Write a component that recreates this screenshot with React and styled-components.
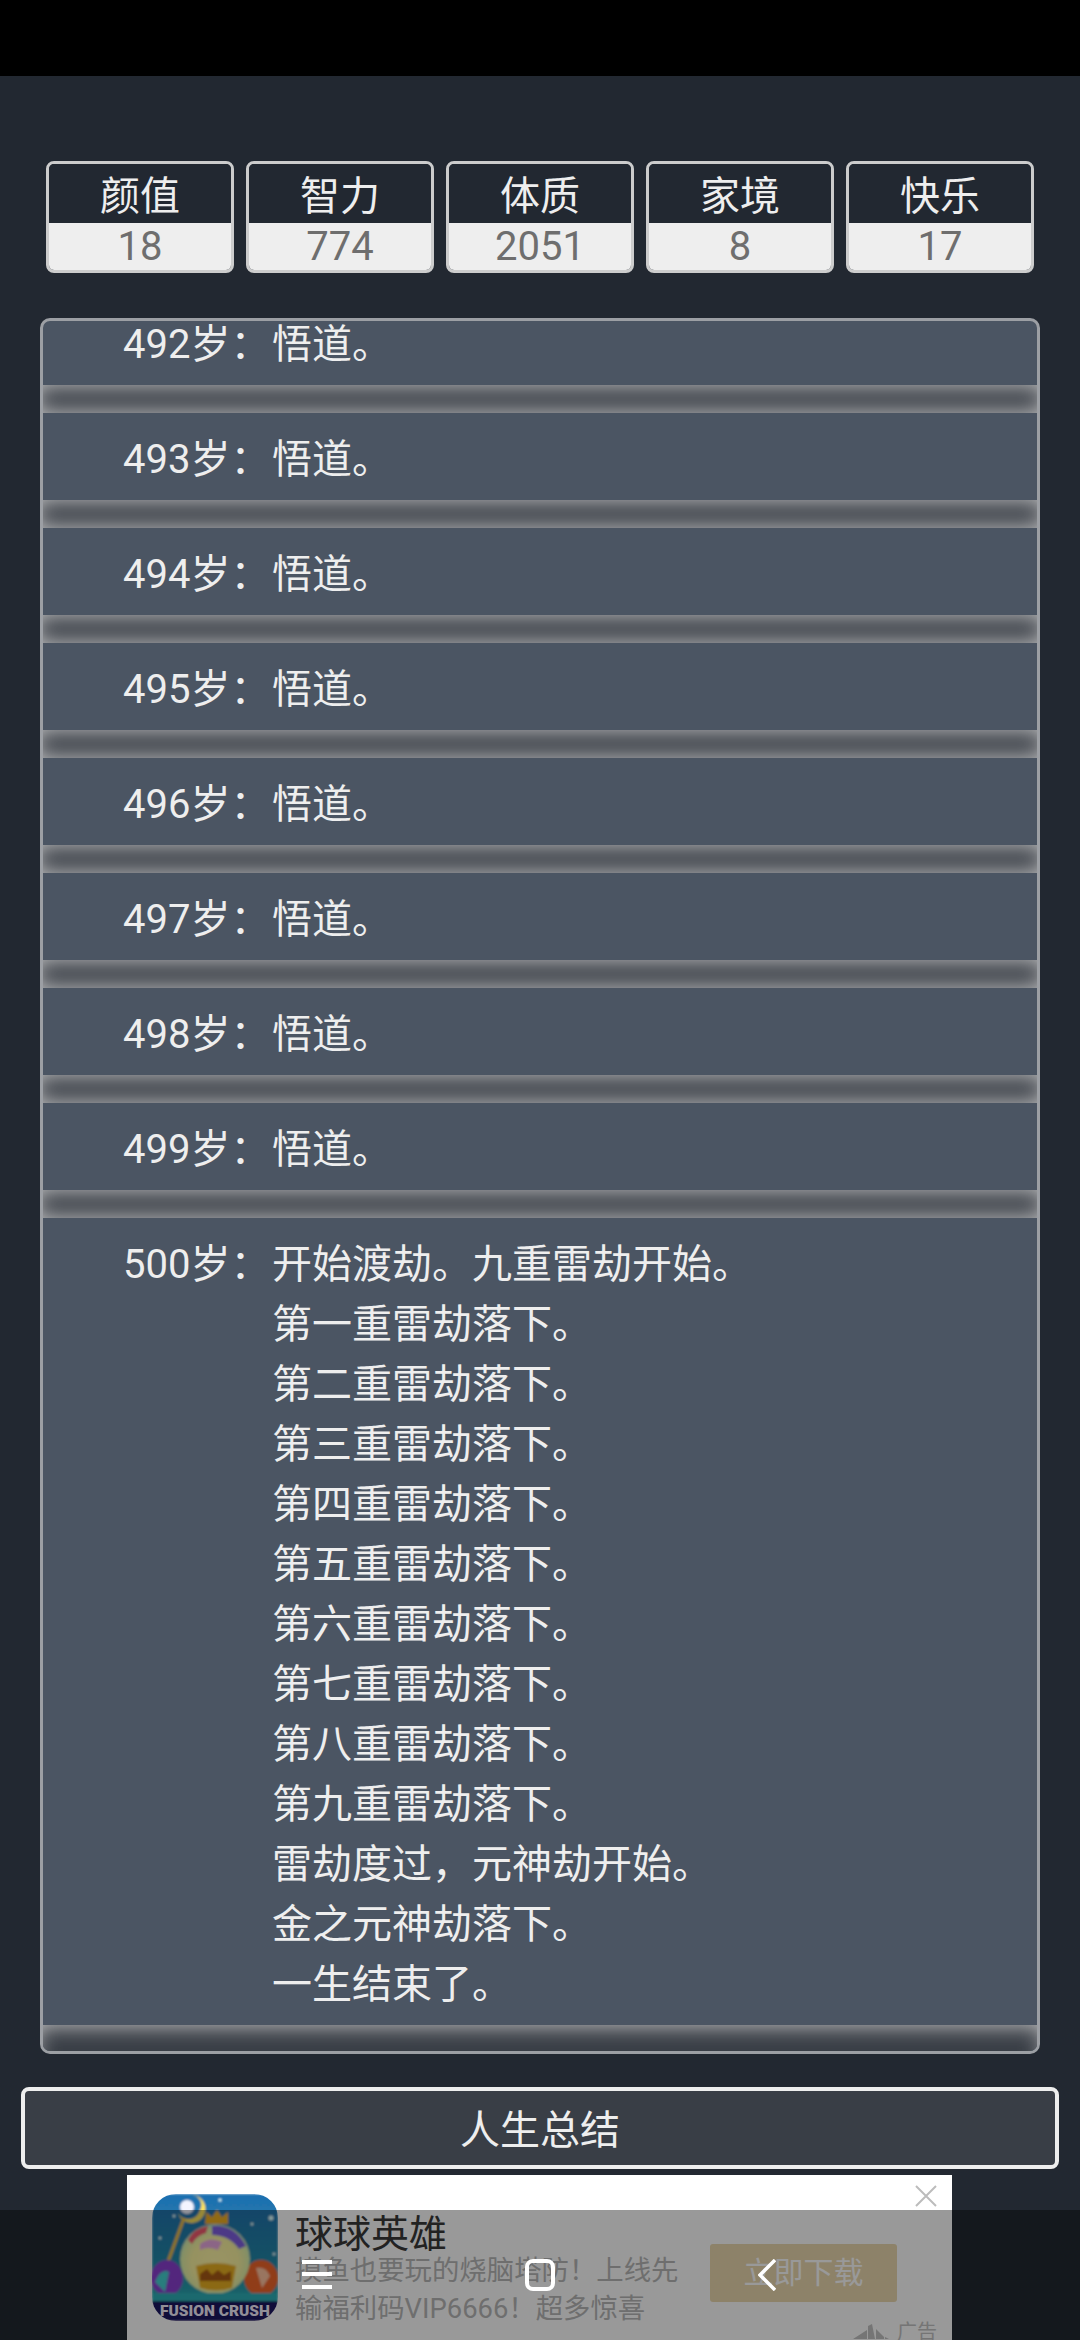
import React from 'react';
import styled, { createGlobalStyle } from 'styled-components';

const GlobalStyle = createGlobalStyle`
  html, body {
    margin: 0;
    padding: 0;
    background: #222831;
    font-family: Roboto, "Noto Sans CJK SC", sans-serif;
  }
`;

const Page = styled.div`
  position: relative;
  width: 1080px;
  height: 2340px;
  overflow: hidden;
  background: #222831;
`;

const StatusBar = styled.div`
  height: 76px;
  background: #000;
`;

const Stats = styled.div`
  display: flex;
  gap: 12px;
  margin: 85px 46px 45px;
`;

const Stat = styled.div`
  width: 188px;
  height: 112px;
  box-sizing: border-box;
  border: 3px solid #ccc;
  border-radius: 8px;
  overflow: hidden;
  text-align: center;
`;

const StatName = styled.div`
  height: 59px;
  line-height: 65px;
  font-size: 40px;
  color: #eee;
  background: #222831;
`;

const StatValue = styled.div`
  height: 47px;
  line-height: 47px;
  font-size: 40px;
  color: #6e6e6e;
  background: #eee;
`;

const LogBox = styled.div`
  width: 1000px;
  height: 1736px;
  margin-left: 40px;
  box-sizing: border-box;
  border: 3px solid #9c9fa4;
  border-radius: 10px;
  overflow: hidden;
  background: #4b5563;
`;

const LogScroll = styled.div`
  margin-top: -23px;
`;

const Entry = styled.div`
  display: grid;
  grid-template-columns: 149px 1fr;
  padding: 17px 0 10px 80px;
  font-size: 40px;
  line-height: 60px;
  color: #eee;
`;

const Rule = styled.div`
  height: ${props => (props.$last ? '60px' : '28px')};
  margin: 0 -7px;
  background: #393e46;
  box-shadow: inset 0 0 22px #d0d0d0;
`;

const SummaryButton = styled.div`
  width: 1038px;
  height: 82px;
  box-sizing: border-box;
  margin: 33px 0 0 21px;
  border: 4px solid #eee;
  border-radius: 8px;
  background: #393e46;
  color: #eee;
  font-size: 40px;
  line-height: 79px;
  text-align: center;
`;

const Ad = styled.div`
  position: absolute;
  left: 127px;
  top: 2175px;
  width: 825px;
  height: 165px;
  box-sizing: border-box;
  padding: 19px 55px 0 25px;
  display: flex;
  align-items: flex-start;
  background: #fff;
`;

const AdIcon = styled.svg`
  flex: none;
  width: 126px;
  height: 127px;
`;

const AdText = styled.div`
  flex: 1;
  margin: 17px 0 0 17px;
`;

const AdTitle = styled.div`
  font-size: 38px;
  line-height: 41px;
  height: 41px;
  padding-top: 3px;
  margin-bottom: -3px;
  color: #3a3a3a;
`;

const AdLine = styled.div`
  font-size: 27.4px;
  line-height: 38px;
  color: #b8b8b8;
  white-space: nowrap;
`;

const AdButton = styled.div`
  flex: none;
  width: 187px;
  height: 58px;
  margin-top: 50px;
  border-radius: 3px;
  background: #ecd9af;
  color: #fff;
  font-size: 30px;
  line-height: 58px;
  text-align: center;
`;

const AdClose = styled.svg`
  position: absolute;
  top: 10px;
  right: 15px;
  width: 22px;
  height: 22px;
`;

const AdMark = styled.div`
  position: absolute;
  right: 15px;
  top: 143px;
  display: flex;
  align-items: center;
  gap: 8px;
  color: #c4c4c4;
  font-size: 20px;
  line-height: 28px;
`;

const NavBar = styled.div`
  position: absolute;
  left: 0;
  right: 0;
  bottom: 0;
  height: 130px;
  padding-left: 206px;
  box-sizing: border-box;
  display: grid;
  grid-template-columns: 222px 224px 230px;
  align-items: center;
  justify-items: center;
  background: rgba(0, 0, 0, 0.4);
`;

const stats = [
  { name: '颜值', value: 18 },
  { name: '智力', value: 774 },
  { name: '体质', value: 2051 },
  { name: '家境', value: 8 },
  { name: '快乐', value: 17 }
];

const entries = [
  { age: 492, lines: ['悟道。'] },
  { age: 493, lines: ['悟道。'] },
  { age: 494, lines: ['悟道。'] },
  { age: 495, lines: ['悟道。'] },
  { age: 496, lines: ['悟道。'] },
  { age: 497, lines: ['悟道。'] },
  { age: 498, lines: ['悟道。'] },
  { age: 499, lines: ['悟道。'] },
  {
    age: 500,
    lines: [
      '开始渡劫。九重雷劫开始。',
      '第一重雷劫落下。',
      '第二重雷劫落下。',
      '第三重雷劫落下。',
      '第四重雷劫落下。',
      '第五重雷劫落下。',
      '第六重雷劫落下。',
      '第七重雷劫落下。',
      '第八重雷劫落下。',
      '第九重雷劫落下。',
      '雷劫度过，元神劫开始。',
      '金之元神劫落下。',
      '一生结束了。'
    ]
  }
];

const GameIcon = () => (
  <AdIcon viewBox="0 0 126 127">
    <defs>
      <linearGradient id="sky" x1="0" y1="0" x2="0" y2="1">
        <stop offset="0" stopColor="#1f6fb0" />
        <stop offset="0.5" stopColor="#2386a8" />
        <stop offset="0.8" stopColor="#2aa4b0" />
      </linearGradient>
      <radialGradient id="orb" cx="0.5" cy="0.55" r="0.55">
        <stop offset="0" stopColor="#fff6a8" />
        <stop offset="0.6" stopColor="#fbf3a0" />
        <stop offset="0.85" stopColor="#dff0a8" />
        <stop offset="1" stopColor="#b8e0c0" />
      </radialGradient>
      <clipPath id="iconClip">
        <rect width="126" height="127" rx="24" />
      </clipPath>
      <filter id="soft">
        <feGaussianBlur stdDeviation="1" />
      </filter>
    </defs>
    <g clipPath="url(#iconClip)">
      <g filter="url(#soft)">
        <rect width="126" height="127" fill="url(#sky)" />
        <circle cx="8" cy="44" r="1.5" fill="#dff" />
        <circle cx="119" cy="24" r="2.5" fill="#dff" />
        <circle cx="68" cy="6" r="1.5" fill="#dff" />
        <circle cx="22" cy="22" r="1.5" fill="#dff" />
        <circle cx="100" cy="30" r="1.5" fill="#dff" />
        <circle cx="122" cy="60" r="1.5" fill="#dff" />
        <path d="M40 1a14 14 0 1 1-14 18a12 12 0 0 0 22-3a10 10 0 0 0-8-15z" fill="#ffe45a" />
        <circle cx="35" cy="13" r="7" fill="#f4f4ff" />
        <path d="M32 24L13 76" stroke="#f2c23a" strokeWidth="3" />
        <ellipse cx="15" cy="84" rx="16" ry="18" fill="#8a3fd0" />
        <path d="M3 88q6-14 14-10l-4 20z" fill="#44d0d0" />
        <ellipse cx="109" cy="84" rx="17" ry="18" fill="#f0662a" />
        <path d="M104 74q10-2 14 8l-8 12z" fill="#ffc4a0" />
        <circle cx="63" cy="65" r="35" fill="url(#orb)" />
        <path d="M60 32q22-2 34 20l-7 3q-10-14-27-14z" fill="#7f5fe0" />
        <path d="M36 46q6-12 20-14l-2 7q-10 3-14 11z" fill="#f05a70" />
        <path d="M48 50q10-8 22-2l-4 8q-10-4-18 0z" fill="#e8a8e0" />
        <path d="M53 30l1-12 6 5 5-7 5 7 6-5 0 12z" fill="#f0b020" />
        <path d="M44 72q20-6 40 0l-4 22q-16 5-32 0z" fill="#e8b020" />
        <path d="M48 80l7-5 5 6 6-5 6 5 7-4v10h-31z" fill="#a85a18" />
        <rect y="99" width="126" height="9" fill="#2eb0b8" />
        <rect y="107" width="126" height="20" fill="#1c1660" />
      </g>
      <text x="63" y="122" textAnchor="middle" fontFamily="Roboto, sans-serif" fontWeight="900" fontSize="15.5" fill="#f4eefc">FUSION CRUSH</text>
    </g>
  </AdIcon>
);

const App = () => (
  <Page>
    <GlobalStyle />
    <StatusBar />
    <Stats>
      {stats.map(stat => (
        <Stat key={stat.name}>
          <StatName>{stat.name}</StatName>
          <StatValue>{stat.value}</StatValue>
        </Stat>
      ))}
    </Stats>
    <LogBox>
      <LogScroll>
        {entries.map((entry, i) => (
          <React.Fragment key={entry.age}>
            <Entry>
              <div>{entry.age}岁：</div>
              <div>
                {entry.lines.map((line, n) => (
                  <div key={n}>{line}</div>
                ))}
              </div>
            </Entry>
            <Rule $last={i === entries.length - 1} />
          </React.Fragment>
        ))}
      </LogScroll>
    </LogBox>
    <SummaryButton>人生总结</SummaryButton>
    <Ad>
      <GameIcon />
      <AdText>
        <AdTitle>球球英雄</AdTitle>
        <AdLine>摸鱼也要玩的烧脑塔防！上线先</AdLine>
        <AdLine>输福利码VIP6666！超多惊喜</AdLine>
      </AdText>
      <AdButton>立即下载</AdButton>
      <AdClose viewBox="0 0 22 22">
        <path d="M1 1L21 21M21 1L1 21" stroke="#bcbcbc" strokeWidth="2" fill="none" />
      </AdClose>
      <AdMark>
        <svg width="36" height="16" viewBox="0 0 36 16">
          <path d="M0 15L14 6V15zM15 15V2L19 0L22 15zM23 15V5L31 13V15zM32 13L36 15H32z" fill="#c4c4c4" />
        </svg>
        广告
      </AdMark>
    </Ad>
    <NavBar>
      <svg width="30" height="30" viewBox="0 0 30 30">
        <path d="M0 2H30M0 14H30M0 27H30" stroke="#fff" strokeWidth="4" fill="none" />
      </svg>
      <svg width="30" height="32" viewBox="0 0 30 32">
        <rect x="2" y="2" width="26" height="28" rx="6" stroke="#fff" strokeWidth="4" fill="none" />
      </svg>
      <svg width="18" height="32" viewBox="0 0 18 32">
        <path d="M17 1L2 16L17 31" stroke="#fff" strokeWidth="3.5" fill="none" />
      </svg>
    </NavBar>
  </Page>
);

export default App;
